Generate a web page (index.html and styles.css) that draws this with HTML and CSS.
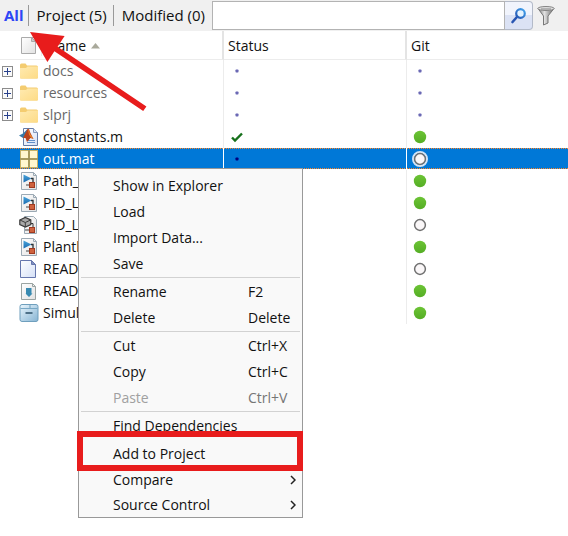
FILE: index.html
```html
<!DOCTYPE html>
<html lang="en">
<head>
<meta charset="utf-8">
<meta name="viewport" content="width=device-width, initial-scale=1">
<title>Project files</title>
<link rel="stylesheet" href="styles.css">
</head>
<body>
<svg class="defs" aria-hidden="true">
  <defs>
    <linearGradient id="g-folder" x1="0" y1="0" x2="1" y2="1"><stop offset="0" stop-color="#ffeab0"/><stop offset="1" stop-color="#fddb86"/></linearGradient>
    <linearGradient id="g-page" x1="0" y1="0" x2="1" y2="1"><stop offset="0" stop-color="#ffffff"/><stop offset="1" stop-color="#d5e0f6"/></linearGradient>
    <linearGradient id="g-grey" x1="0" y1="0" x2="1" y2="1"><stop offset="0" stop-color="#ffffff"/><stop offset="1" stop-color="#e2e2e2"/></linearGradient>
    <linearGradient id="g-green" x1="0" y1="0" x2="0" y2="1"><stop offset="0" stop-color="#6cc435"/><stop offset="1" stop-color="#55ad25"/></linearGradient>
    <linearGradient id="g-box" x1="0" y1="0" x2="1" y2="1"><stop offset="0" stop-color="#eaf6fd"/><stop offset="1" stop-color="#86b4d3"/></linearGradient>
    <linearGradient id="g-blue" x1="0" y1="0" x2="0" y2="1"><stop offset="0" stop-color="#49a5dc"/><stop offset="1" stop-color="#1c6bb0"/></linearGradient>
    <linearGradient id="g-lens" x1="0" y1="1" x2="1" y2="0"><stop offset="0" stop-color="#2453b0"/><stop offset="1" stop-color="#43a4ee"/></linearGradient>
    <linearGradient id="g-metal" x1="0" y1="0" x2="1" y2="0"><stop offset="0" stop-color="#777"/><stop offset=".4" stop-color="#e2e2e2"/><stop offset="1" stop-color="#666"/></linearGradient>
  </defs>
  <symbol id="plus" viewBox="0 0 11 11"><rect x=".5" y=".5" width="10" height="10" fill="#fafafa" stroke="#8c8c8c"/><path d="M2 5.500h7M5.500 2v7" stroke="#27408b"/></symbol>
  <symbol id="folder" viewBox="0 0 20 20"><path d="M1 4q0-1.500 1.500-1.500h4L8 4.500h9.500Q19 4.500 19 6v10.500q0 1-1 1H2q-1 0-1-1z" fill="#f4cc70"/><path d="M1 7h6l1.500-1.500H19v11q0 1-1 1H2q-1 0-1-1z" fill="url(#g-folder)"/></symbol>
  <symbol id="mfile" viewBox="0 0 20 20"><path d="M4.500 1.500h10l4 4v13h-14z" fill="url(#g-page)" stroke="#657ba6"/><path d="M14.500 1.500v4h4" fill="#dce5f4" stroke="#8598bc"/><path d="M8 13.500h8M8 15.500h8" stroke="#5f8fcb"/><path d="M0 8.500l4-2L8.500 2l-2 8L4 11z" fill="#3578a8"/><path d="M4 11l4.500-9Q10 .500 11 5l3.500 7-3-1L8 15l-1.500-4z" fill="#b8431e"/><path d="M9 2q1 1 2 5l3.500 5-2.500-1.500-2-3z" fill="#ee8d29"/></symbol>
  <symbol id="grid" viewBox="0 0 20 20"><path d="M1 1h18v18H1z" fill="#c4b268"/><path d="M2 2h7v7H2zM11 2h7v7h-7zM2 11h7v7H2zM11 11h7v7h-7z" fill="#fff7cf"/><path d="M10 1v18M1 10h18" stroke="#8d8554" stroke-width="1"/></symbol>
  <symbol id="model" viewBox="0 0 20 20"><path d="M2.500 1.500h12l3 3v14h-15z" fill="url(#g-grey)" stroke="#9caab5"/><path d="M14.500 1.500v3h3" fill="none" stroke="#9caab5"/><path d="M4.500 3.500l8 4-8 4z" fill="url(#g-blue)"/><path d="M12 7.500h2V12" fill="none" stroke="#2b3338" stroke-width="1.300"/><rect x="10.500" y="11.500" width="5" height="5" fill="#cf623e" stroke="#a03a20"/><path d="M7 14h3" stroke="#444"/></symbol>
  <symbol id="modelref" viewBox="0 0 20 20"><path d="M5.500 1.500h9l3 3v14h-12z" fill="url(#g-grey)" stroke="#9caab5"/><path d="M12 8.500h2V12" fill="none" stroke="#333"/><rect x="10.500" y="12.500" width="5" height="5" fill="#cf623e" stroke="#a03a20"/><path d="M.8 5l5.500-2.500L11.800 5v4.500L6.300 12 .8 9.500z" fill="#a9a9a9" stroke="#3c3c3c" stroke-width="1.200"/><path d="M1 5l5.300 2.500L11.500 5M6.300 7.500V12" fill="none" stroke="#3c3c3c"/><path d="M6 15h4" stroke="#444"/></symbol>
  <symbol id="page" viewBox="0 0 20 20"><path d="M1.500 1.500h11l4 4v13h-15z" fill="url(#g-page)" stroke="#6677ad"/><path d="M12.500 1.500v4h4z" fill="#8291c0" stroke="#6677ad"/></symbol>
  <symbol id="readme" viewBox="0 0 20 20"><path d="M2.500 2.500h11l3 3v13h-14z" fill="url(#g-grey)" stroke="#9ba4a2"/><path d="M13.500 2.500v3h3" fill="none" stroke="#9ba4a2"/><path d="M7 7h5.500v5.500h1L10 16l-3.500-3.500H7z" fill="#388ab1"/></symbol>
  <symbol id="box" viewBox="0 0 20 20"><path d="M1 3.500q0-2 2-2h14q2 0 2 2v13q0 2-2 2H3q-2 0-2-2z" fill="url(#g-box)" stroke="#6f9fbd"/><path d="M1.500 5.500h17" stroke="#77a7c5"/><path d="M11 1.500v3.500" stroke="#6f9fbd"/><path d="M6.500 10h7" stroke="#42667d" stroke-width="1.800"/></symbol>
  <symbol id="dot" viewBox="0 0 18 18"><rect x="7.500" y="7.500" width="3" height="3" rx=".7" fill="currentColor"/></symbol>
  <symbol id="check" viewBox="0 0 18 18"><path d="M4 9.500l3 3 7-7" fill="none" stroke="#16701b" stroke-width="2.400"/></symbol>
  <symbol id="green" viewBox="0 0 18 18"><circle cx="9" cy="9" r="6.200" fill="url(#g-green)"/></symbol>
  <symbol id="ring" viewBox="0 0 18 18"><circle class="halo" cx="9" cy="9" r="7" fill="none"/><circle cx="9" cy="9" r="5.400" fill="#faf7f8" stroke="#707070" stroke-width="1.500"/></symbol>
</svg>

<header class="toolbar">
  <nav class="filters">
    <a class="filter active" href="#all">All</a>
    <a class="filter" href="#project">Project (5)</a>
    <a class="filter" href="#modified">Modified (0)</a>
  </nav>
  <form class="search">
    <input class="search-box" type="text" aria-label="Search files">
    <button class="search-button" type="button" aria-label="Search">
      <svg width="18" height="18" viewBox="0 0 18 18"><path d="M2.500 15L6.500 10.500" stroke="#2855b2" stroke-width="2.600" stroke-linecap="round"/><circle cx="10.500" cy="6.500" r="4.300" fill="#e4f3ff" stroke="url(#g-lens)" stroke-width="2.200"/></svg>
    </button>
  </form>
  <button class="filter-button" type="button" aria-label="Filter">
    <svg width="18" height="20" viewBox="0 0 18 20"><path d="M1 2.500L6.500 10v9l4.500-2v-7l6-7.500z" fill="url(#g-metal)" stroke="#777"/><ellipse cx="9" cy="2.500" rx="8.200" ry="2" fill="#ddd" stroke="#858585"/><path d="M4 3h10" stroke="#888"/></svg>
  </button>
</header>

<main>
  <table class="files">
    <colgroup><col class="col-name"><col class="col-status"><col></colgroup>
    <thead>
      <tr>
        <th scope="col"><span class="name-head"><svg class="icon" viewBox="0 0 20 20"><path d="M2.500 1.500h14v16h-14z" fill="url(#g-grey)" stroke="#aaa"/><path d="M12.500 1.500v4h4z" fill="#ccc" stroke="#aaa"/></svg><span class="name-label">Name</span><svg width="9" height="6" viewBox="0 0 9 6"><path d="M0 5.500L4.500 0 9 5.500z" fill="#a9a99b"/></svg></span></th>
        <th scope="col">Status</th>
        <th scope="col">Git</th>
      </tr>
    </thead>
    <tbody>
      <tr class="dir"><td><span class="file"><svg class="toggle"><use href="#plus"/></svg><svg class="icon"><use href="#folder"/></svg>docs</span></td><td><svg class="mark"><use href="#dot"/></svg></td><td><svg class="mark"><use href="#dot"/></svg></td></tr>
      <tr class="dir"><td><span class="file"><svg class="toggle"><use href="#plus"/></svg><svg class="icon"><use href="#folder"/></svg>resources</span></td><td><svg class="mark"><use href="#dot"/></svg></td><td><svg class="mark"><use href="#dot"/></svg></td></tr>
      <tr class="dir"><td><span class="file"><svg class="toggle"><use href="#plus"/></svg><svg class="icon"><use href="#folder"/></svg>slprj</span></td><td><svg class="mark"><use href="#dot"/></svg></td><td><svg class="mark"><use href="#dot"/></svg></td></tr>
      <tr><td><span class="file"><span class="toggle"></span><svg class="icon"><use href="#mfile"/></svg>constants.m</span></td><td><svg class="mark"><use href="#check"/></svg></td><td><svg class="mark"><use href="#green"/></svg></td></tr>
      <tr class="selected"><td><span class="file"><span class="toggle"></span><svg class="icon"><use href="#grid"/></svg>out.mat</span></td><td><svg class="mark"><use href="#dot"/></svg></td><td><svg class="mark"><use href="#ring"/></svg></td></tr>
      <tr><td><span class="file"><span class="toggle"></span><svg class="icon"><use href="#model"/></svg>Path_</span></td><td></td><td><svg class="mark"><use href="#green"/></svg></td></tr>
      <tr><td><span class="file"><span class="toggle"></span><svg class="icon"><use href="#model"/></svg>PID_L</span></td><td></td><td><svg class="mark"><use href="#green"/></svg></td></tr>
      <tr><td><span class="file"><span class="toggle"></span><svg class="icon"><use href="#modelref"/></svg>PID_L</span></td><td></td><td><svg class="mark"><use href="#ring"/></svg></td></tr>
      <tr><td><span class="file"><span class="toggle"></span><svg class="icon"><use href="#model"/></svg>Plantl</span></td><td></td><td><svg class="mark"><use href="#green"/></svg></td></tr>
      <tr><td><span class="file"><span class="toggle"></span><svg class="icon"><use href="#page"/></svg>READ</span></td><td></td><td><svg class="mark"><use href="#ring"/></svg></td></tr>
      <tr><td><span class="file"><span class="toggle"></span><svg class="icon"><use href="#readme"/></svg>READ</span></td><td></td><td><svg class="mark"><use href="#green"/></svg></td></tr>
      <tr><td><span class="file"><span class="toggle"></span><svg class="icon"><use href="#box"/></svg>Simul</span></td><td></td><td><svg class="mark"><use href="#green"/></svg></td></tr>
    </tbody>
  </table>
</main>

<div class="menu" role="menu">
  <button class="item" role="menuitem">Show in Explorer</button>
  <button class="item" role="menuitem">Load</button>
  <button class="item" role="menuitem">Import Data...</button>
  <button class="item" role="menuitem">Save</button>
  <hr>
  <button class="item" role="menuitem">Rename<span class="key">F2</span></button>
  <button class="item" role="menuitem">Delete<span class="key">Delete</span></button>
  <hr>
  <button class="item" role="menuitem">Cut<span class="key">Ctrl+X</span></button>
  <button class="item" role="menuitem">Copy<span class="key">Ctrl+C</span></button>
  <button class="item" role="menuitem" disabled>Paste<span class="key">Ctrl+V</span></button>
  <hr>
  <button class="item" role="menuitem">Find Dependencies</button>
  <button class="item marked" role="menuitem">Add to Project</button>
  <button class="item sub" role="menuitem">Compare<svg class="chevron" viewBox="0 0 6 10"><path d="M1 1l4 4-4 4"/></svg></button>
  <button class="item sub" role="menuitem">Source Control<svg class="chevron" viewBox="0 0 6 10"><path d="M1 1l4 4-4 4"/></svg></button>
</div>

<svg class="arrow" width="120" height="84" viewBox="28 30 120 84" aria-hidden="true"><path d="M30 32L64.600 36 57.600 46.700 146.400 106.500 143.200 111.100 54.400 51.300 47.400 62z" fill="#e81c1c"/></svg>
</body>
</html>
```
FILE: styles.css
```css
* { box-sizing: border-box; }

body {
  margin: 0;
  position: relative;
  min-height: 100vh;
  background: #fff;
  color: #111;
  font: 14px/20px "Open Sans", "Noto Sans", sans-serif;
}

button, input { font: inherit; color: inherit; }
svg { display: block; flex: none; }
.defs { position: absolute; width: 0; height: 0; }

.toolbar {
  display: flex;
  align-items: center;
  gap: 4px;
  height: 31px;
  padding: 0 13px 0 4px;
  background: #f0f0f0;
}
.filters { display: flex; margin-right: 3px; font-size: 15px; }
.filter {
  padding-left: 8px;
  padding-right: 6px;
  line-height: 21px;
  color: inherit;
  text-decoration: none;
  white-space: nowrap;
}
.filter + .filter { border-left: 1px solid #999; }
.filter:first-child { padding-left: 0; padding-right: 4px; }
.filter:last-child { padding-right: 0; }
.active { color: #2d46f5; font-weight: 700; }

.search { display: flex; flex: 1; height: 29px; }
.search-box {
  flex: 1;
  min-width: 0;
  padding: 0 6px;
  border: 1px solid #b3b3b3;
  background: #fff;
}
.search-button {
  display: flex;
  align-items: center;
  justify-content: center;
  width: 28px;
  padding: 0;
  border: 1px solid #b3bac8;
  border-left: 0;
  border-radius: 0 4px 4px 0;
  background: linear-gradient(#f1f4fc 50%, #dbe2f4 50%);
}
.filter-button { padding: 0; border: 0; background: none; }

.files {
  width: 100%;
  border-collapse: separate;
  border-spacing: 0;
  table-layout: fixed;
}
.col-name { width: 224px; }
.col-status { width: 183px; }
.files th {
  height: 29px;
  padding: 2px 4px 0;
  border-right: 2px solid #e4e4e4;
  border-bottom: 1px solid #ececec;
  font-weight: 400;
  text-align: left;
}
.files td {
  height: 22px;
  padding: 0 4px;
  border-right: 1px solid #ececec;
}
.files th:last-child, .files td:last-child { border-right: 0; }
.files th:first-child, .files td:first-child { padding-left: 2px; }
.name-head { display: flex; align-items: center; padding-left: 17px; }
.name-label { margin: 0 5px 0 2px; padding-left: 5px; border-left: 1px solid #ececec; }
.file { display: flex; align-items: center; white-space: nowrap; }
.toggle { width: 11px; height: 11px; margin-right: 6px; }
.icon { width: 20px; height: 20px; margin-right: 4px; }
.name-head .icon { margin-right: 0; }
.mark { width: 18px; height: 18px; color: #6a68b4; }
.dir { color: #686868; }

.selected { color: #fff; }
.selected td {
  border-color: #fff;
  background:
    repeating-linear-gradient(90deg, #ff8728 0 1px, #0078d7 1px 2px) 0 0 / 100% 1px no-repeat,
    repeating-linear-gradient(90deg, #ff8728 0 1px, #0078d7 1px 2px) 0 20px / 100% 1px no-repeat,
    linear-gradient(#0078d7, #0078d7) 0 0 / 100% 21px no-repeat;
  background-clip: padding-box;
}
.selected .mark { color: #000080; --halo: #d3e4f5; }
.halo { stroke: var(--halo, none); stroke-width: 2; }

.menu {
  position: absolute;
  top: 168px;
  left: 78px;
  display: flex;
  flex-direction: column;
  width: 225px;
  padding: 4px 2px 0;
  border: 1px solid #999;
  background: #f9f9f9;
}
.menu hr {
  width: auto;
  height: 2px;
  margin: 0;
  border: 0;
  border-top: 1px solid #d2d2d2;
}
.item {
  display: flex;
  align-items: center;
  height: 26px;
  padding: 0 4px 0 32px;
  border: 0;
  background: none;
  text-align: left;
  white-space: nowrap;
}
.item:disabled { color: #a0a0a0; }
.item:disabled .key { color: #757575; }
.key { width: 48px; margin-left: auto; }
.sub { height: 25px; }
.chevron {
  width: 6px;
  height: 10px;
  margin-left: auto;
  fill: none;
  stroke: #222;
  stroke-width: 1.5;
}
.marked { position: relative; margin-top: 2px; }
.marked::after {
  content: "";
  position: absolute;
  inset: -10px -3px -4px -4px;
  border: 6px solid #e81c1c;
}

.arrow { position: absolute; top: 30px; left: 28px; }
```
